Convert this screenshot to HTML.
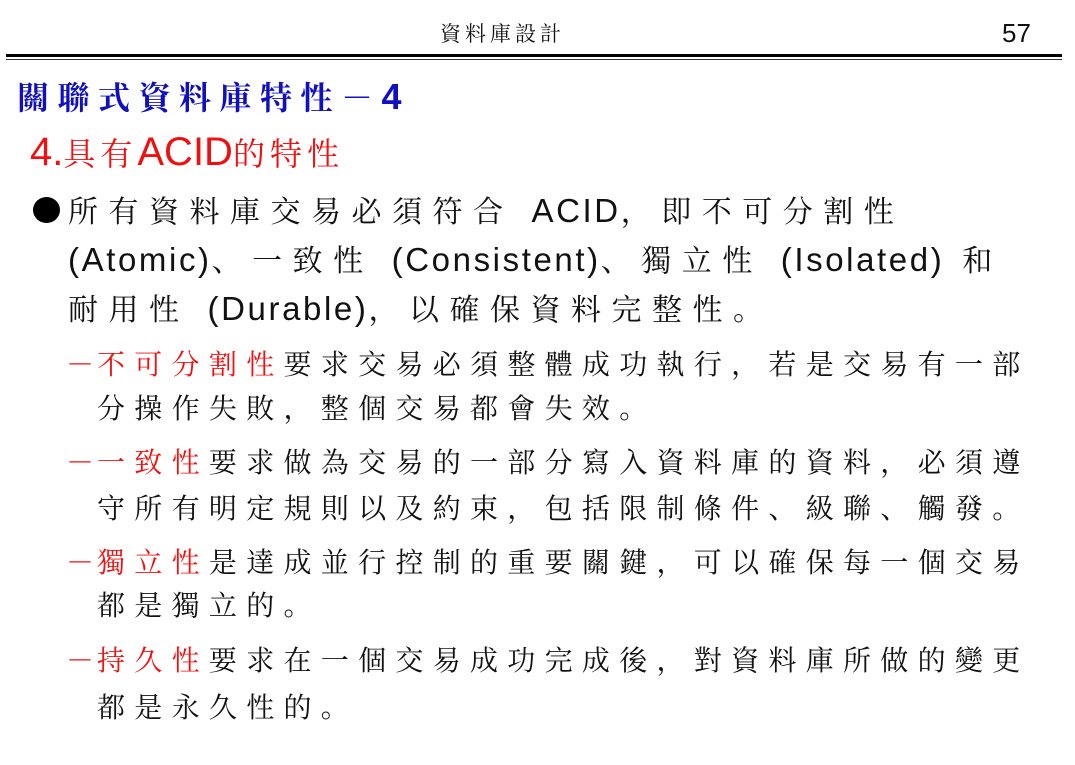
<!DOCTYPE html>
<html><head><meta charset="utf-8"><style>
body{margin:0;width:1075px;height:765px;background:#fff;overflow:hidden;position:relative;font-family:"Liberation Serif","Noto Serif CJK SC","Noto Serif CJK TC",serif;color:#111}
.a{position:absolute;white-space:nowrap;line-height:1}
.l{font-family:"Liberation Sans",sans-serif;letter-spacing:2.6px}
.r{color:#f01010}
.b1{font-size:30px;letter-spacing:10.5px}
.s{font-size:28px;letter-spacing:9.3px}
</style></head><body>
<div class="a" style="left:440px;top:24px;font-size:21px;letter-spacing:4px">資料庫設計</div>
<div class="a l" style="left:1002px;top:20px;font-size:26px;letter-spacing:0">57</div>
<div style="position:absolute;left:6px;top:54px;width:1056px;height:3px;background:#000"></div>
<div style="position:absolute;left:6px;top:59px;width:1056px;height:1px;background:#333"></div>
<div class="a" style="left:17px;top:79px;font-size:32px;letter-spacing:8.5px;color:#1010c0;font-weight:bold">關聯式資料庫特性－<span class="l" style="font-size:36px;letter-spacing:0">4</span></div>
<div class="a r" style="left:30px;top:132px;font-size:32px;letter-spacing:5px"><span class="l" style="font-size:40px;letter-spacing:0">4.</span>具有<span class="l" style="font-size:40px;letter-spacing:0">ACID</span>的特性</div>
<div style="position:absolute;left:33px;top:197px;width:27px;height:26px;border-radius:50%;background:#000"></div>
<div class="a b1" style="left:68px;top:194px">所有資料庫交易必須符合 <span class="l" style="font-size:33px">ACID</span>，即不可分割性</div>
<div class="a b1" style="left:68px;top:243px"><span class="l" style="font-size:33px">(Atomic)</span>、一致性 <span class="l" style="font-size:33px">(Consistent)</span>、獨立性 <span class="l" style="font-size:33px">(Isolated)</span> 和</div>
<div class="a b1" style="left:68px;top:292px">耐用性 <span class="l" style="font-size:33px">(Durable)</span>，以確保資料完整性。</div>
<div class="a s r" style="left:66px;top:352px">－</div>
<div class="a s" style="left:97px;top:352px"><span class="r">不可分割性</span>要求交易必須整體成功執行，若是交易有一部</div>
<div class="a s" style="left:97px;top:396px">分操作失敗，整個交易都會失效。</div>
<div class="a s r" style="left:66px;top:450px">－</div>
<div class="a s" style="left:97px;top:450px"><span class="r">一致性</span>要求做為交易的一部分寫入資料庫的資料，必須遵</div>
<div class="a s" style="left:97px;top:496px">守所有明定規則以及約束，包括限制條件、級聯、觸發。</div>
<div class="a s r" style="left:66px;top:550px">－</div>
<div class="a s" style="left:97px;top:550px"><span class="r">獨立性</span>是達成並行控制的重要關鍵，可以確保每一個交易</div>
<div class="a s" style="left:97px;top:593px">都是獨立的。</div>
<div class="a s r" style="left:66px;top:648px">－</div>
<div class="a s" style="left:97px;top:648px"><span class="r">持久性</span>要求在一個交易成功完成後，對資料庫所做的變更</div>
<div class="a s" style="left:97px;top:695px">都是永久性的。</div>
</body></html>
